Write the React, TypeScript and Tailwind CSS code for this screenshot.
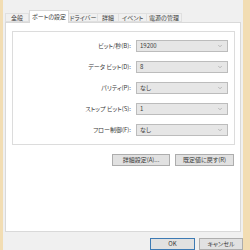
import { ChevronDown } from "lucide-react"

const rows = [
  { label: "ビット/秒(B):", value: "19200" },
  { label: "データ ビット(D):", value: "8" },
  { label: "パリティ(P):", value: "なし" },
  { label: "ストップ ビット(S):", value: "1" },
  { label: "フロー制御(F):", value: "なし" },
]

// widths measured off the screenshot
const tabs = [
  { name: "全般", w: "w-[24px]" },
  { name: "ポートの設定", w: "w-[40px]" },
  { name: "ドライバー", w: "w-[29px]" },
  { name: "詳細", w: "w-[21px]" },
  { name: "イベント", w: "w-[28px]" },
  { name: "電源の管理", w: "w-[35px]" },
]

function Select({ value }: { value: string }) {
  return (
    <div className="flex h-[12px] w-[92px] items-center justify-between border border-[#bcbcbc] bg-[#e6e6e6] pl-[3px] pr-[4px]">
      <span>{value}</span>
      <ChevronDown className="text-[#8a8a8a]" size={6} strokeWidth={2} />
    </div>
  )
}

function Btn({ children, primary }: { children: React.ReactNode; primary?: boolean }) {
  return (
    <div
      className={
        "flex h-[12px] items-center justify-center bg-[#e1e1e1] " +
        (primary ? "border border-[#3d7ab3]" : "border border-[#adadad]")
      }
    >
      {children}
    </div>
  )
}

export default function App() {
  return (
    <div className="flex h-[250px] w-[250px] overflow-hidden border-l-[3px] border-r-[7px] border-[#f2ddb3] bg-[#f0f0f0] font-['Noto_Sans_CJK_JP',sans-serif] text-[6px] leading-none text-[#3a3a3a] [font-feature-settings:'palt']">
      <div className="flex flex-1 flex-col pt-[10px]">
        {/* tabs */}
        <div className="flex h-[12px] items-end pl-[2px]">
          {tabs.map((t, i) =>
            i === 1 ? (
              <div key={t.name} className={"relative z-10 -mb-px flex h-[13px] items-center justify-center border border-b-0 border-[#d9d9d9] bg-white " + t.w}>
                {t.name}
              </div>
            ) : (
              <div key={t.name} className={"flex h-[9px] items-center justify-center border border-l-0 border-[#e0e0e0] first:border-l " + t.w}>
                {t.name}
              </div>
            )
          )}
        </div>
        {/* panel */}
        <div className="ml-[2px] mr-[2px] flex h-[218px] flex-col border border-[#d9d9d9] bg-white pl-[6px] pr-[5px] pt-[8px]">
          <div className="flex flex-col gap-[9px] border border-[#dcdcdc] py-[8px]">
            {rows.map((r) => (
              <div key={r.label} className="flex items-center gap-[5px]">
                <div className="w-[118px] text-right">{r.label}</div>
                <Select value={r.value} />
              </div>
            ))}
          </div>
          <div className="mt-[9px] flex justify-end gap-[5px] pr-px">
            <div className="w-[58px]">
              <Btn>詳細設定(A)...</Btn>
            </div>
            <div className="w-[59px]">
              <Btn>既定値に戻す(R)</Btn>
            </div>
          </div>
        </div>
        {/* dialog buttons */}
        <div className="mt-[6px] flex justify-end gap-[4px]">
          <div className="w-[45px]">
            <Btn primary>OK</Btn>
          </div>
          <div className="w-[44px]">
            <Btn>キャンセル</Btn>
          </div>
        </div>
      </div>
    </div>
  )
}
